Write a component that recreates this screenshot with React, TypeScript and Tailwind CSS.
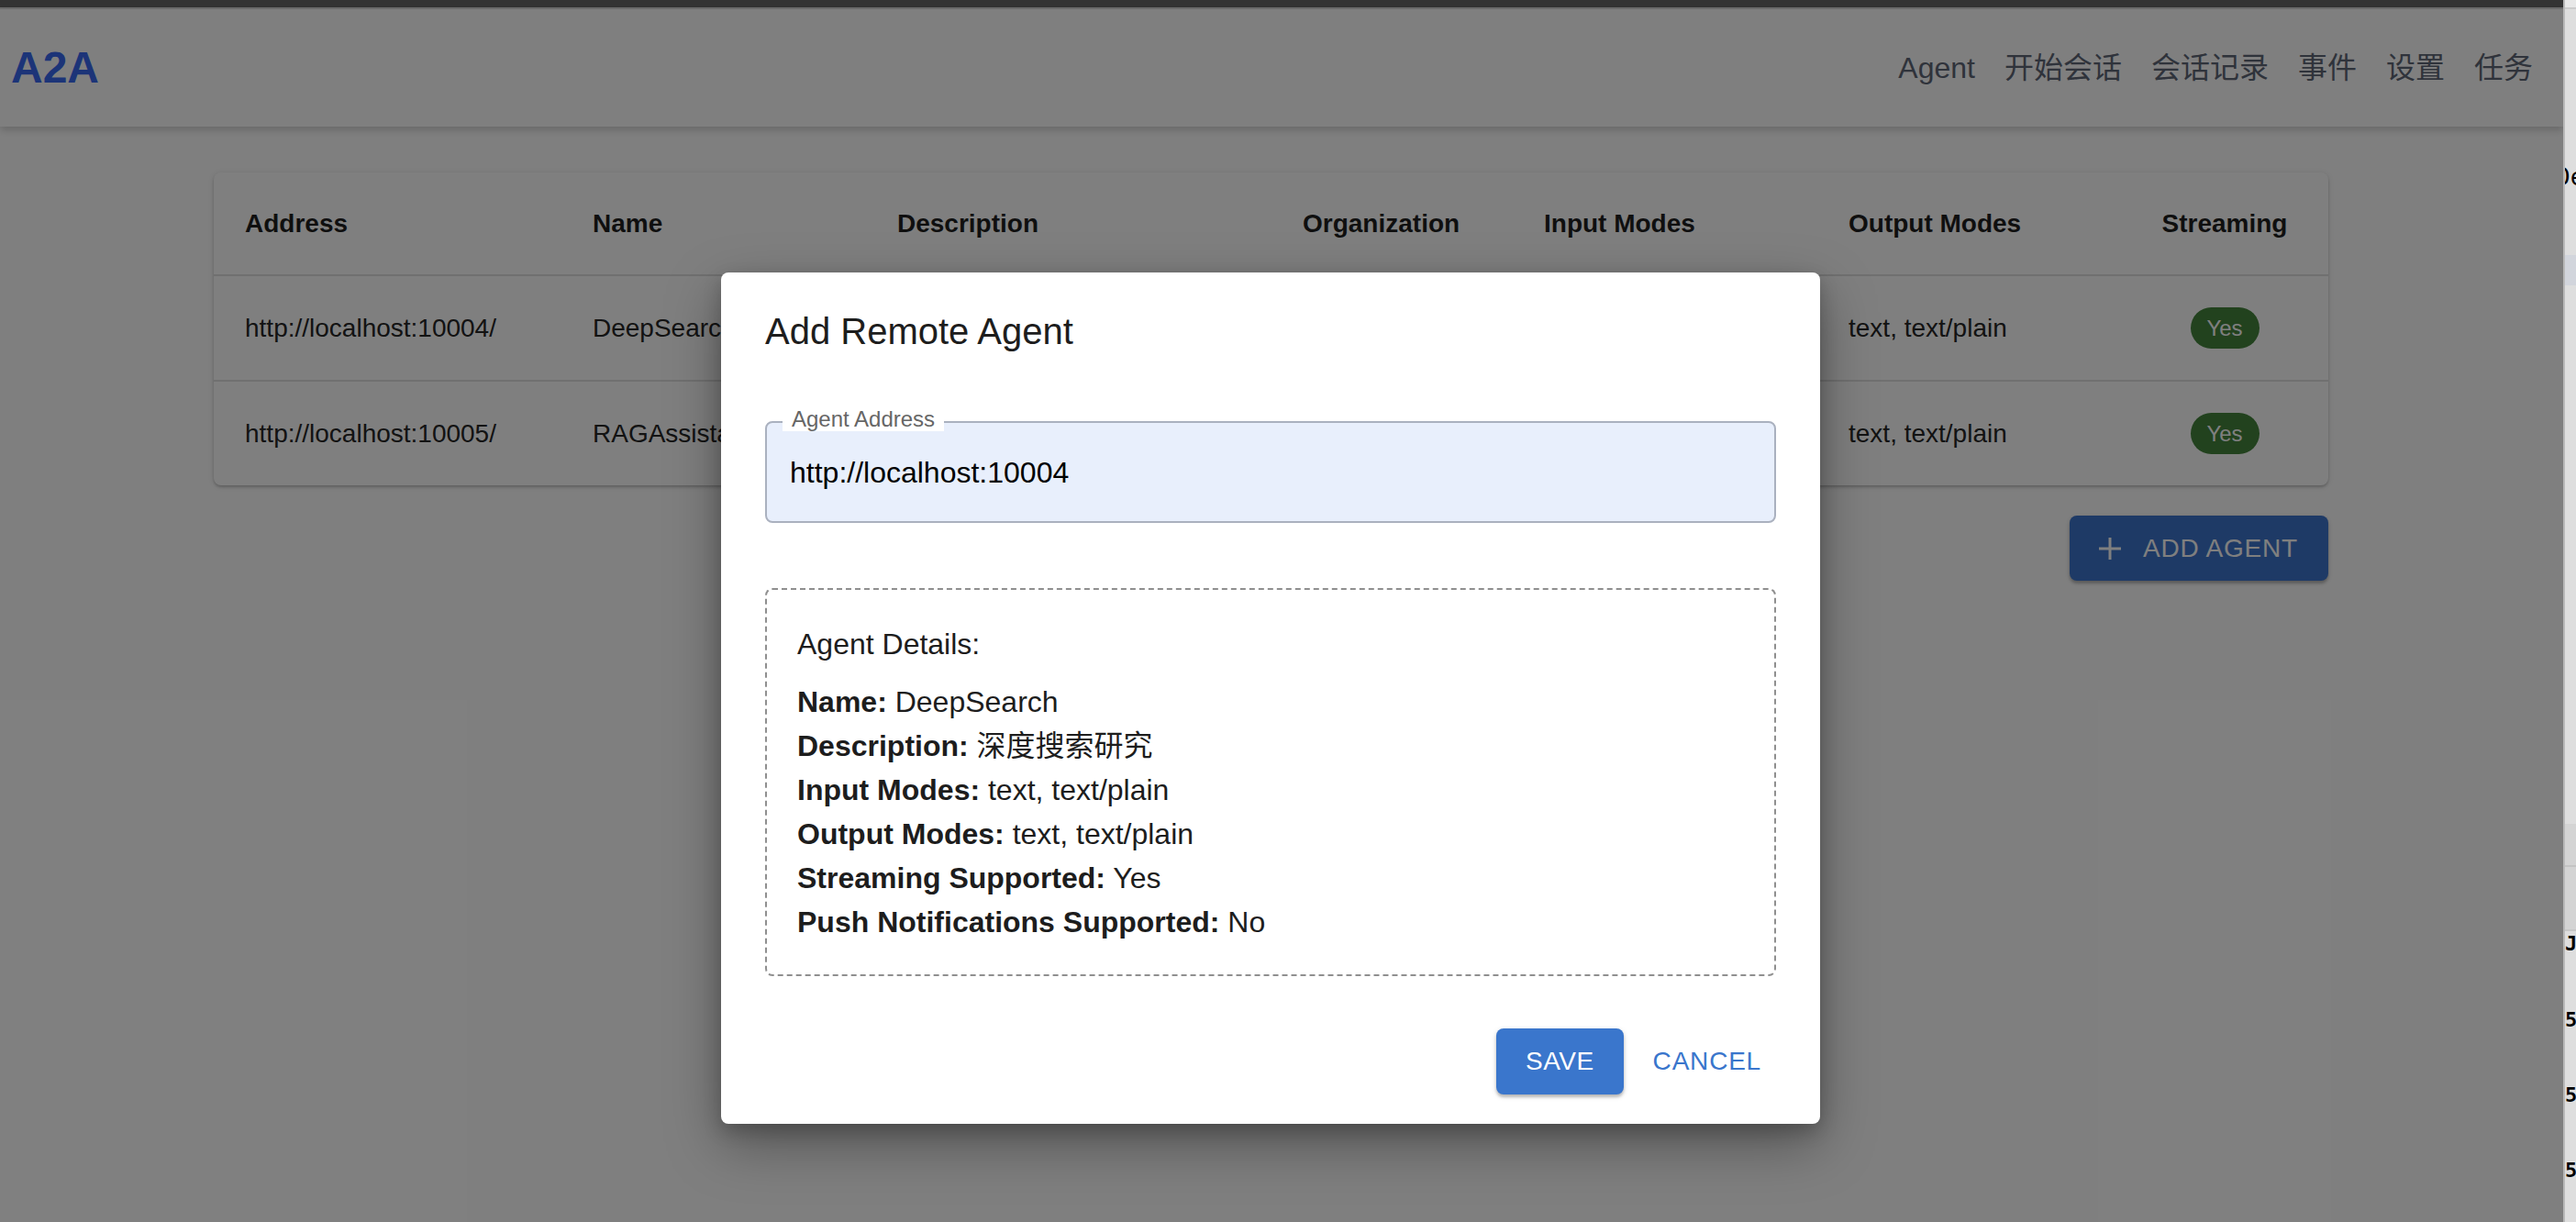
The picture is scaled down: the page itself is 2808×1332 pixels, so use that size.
import React from "react";

const cols = "grid grid-cols-[379px_332px_442px_263px_332px_331px_226px] items-center";

type Row = {
  address: string;
  name: string;
  description: string;
  org: string;
  input: string;
  output: string;
};

const rows: Row[] = [
  {
    address: "http://localhost:10004/",
    name: "DeepSearch",
    description: "深度搜索研究",
    org: "",
    input: "text, text/plain",
    output: "text, text/plain",
  },
  {
    address: "http://localhost:10005/",
    name: "RAGAssistant",
    description: "知识库问答",
    org: "",
    input: "text, text/plain",
    output: "text, text/plain",
  },
];

function PlusIcon() {
  return (
    <svg width="26" height="26" viewBox="0 0 26 26" fill="none">
      <path d="M13 1v24M1 13h24" stroke="white" strokeWidth="3" strokeLinecap="butt" />
    </svg>
  );
}

function DetailLine({ label, value }: { label: string; value: string }) {
  return (
    <div className="leading-[48px] whitespace-nowrap">
      <span className="font-bold">{label}</span> {value}
    </div>
  );
}

export default function App() {
  return (
    <div className="flex w-[2808px] h-[1332px] overflow-hidden font-['Liberation_Sans','Noto_Sans_CJK_SC',sans-serif]">
      {/* Page viewport */}
      <div className="relative w-[2794px] h-full bg-white overflow-hidden">
        <div className="h-[8px] bg-[#666666]" />
        <div className="h-[2px] bg-[#dcdcdc]" />
        <header className="relative z-10 h-[128px] bg-white shadow-[0_4px_8px_rgba(0,0,0,0.18)] flex items-center justify-between pl-[12px] pr-[33px]">
          <div className="text-[48px] font-bold text-[#3869f0] leading-none">A2A</div>
          <nav className="flex gap-[32px] text-[32px] text-[#5e6676] leading-none">
            <span>Agent</span>
            <span>开始会话</span>
            <span>会话记录</span>
            <span>事件</span>
            <span>设置</span>
            <span>任务</span>
          </nav>
        </header>

        <main className="pt-[50px] pl-[233px]">
          <div className="w-[2305px] rounded-[8px] bg-white shadow-[0_2px_3px_rgba(0,0,0,0.2),0_1px_8px_rgba(0,0,0,0.1)] overflow-hidden">
            <div className={`${cols} h-[111px] text-[28px] font-bold text-[#1f1f1f]`}>
              <div className="pl-[34px]">Address</div>
              <div className="pl-[34px]">Name</div>
              <div className="pl-[34px]">Description</div>
              <div className="pl-[34px]">Organization</div>
              <div className="pl-[34px]">Input Modes</div>
              <div className="pl-[34px]">Output Modes</div>
              <div className="text-center">Streaming</div>
            </div>
            {rows.map((r) => (
              <div
                key={r.address}
                className={`${cols} h-[115px] border-t-2 border-[#e0e0e0] text-[28px] text-[#262626] whitespace-nowrap`}
              >
                <div className="pl-[34px]">{r.address}</div>
                <div className="pl-[34px]">{r.name}</div>
                <div className="pl-[34px]">{r.description}</div>
                <div className="pl-[34px]">{r.org}</div>
                <div className="pl-[34px]">{r.input}</div>
                <div className="pl-[34px]">{r.output}</div>
                <div className="flex justify-center">
                  <span className="inline-flex h-[45px] w-[75px] items-center justify-center rounded-full bg-[#44843c] text-[24px] text-white">
                    Yes
                  </span>
                </div>
              </div>
            ))}
          </div>
          <div className="w-[2305px] flex justify-end mt-[33px]">
            <button className="flex items-center h-[71px] w-[282px] rounded-[8px] bg-[#3c74cc] pl-[31px] gap-[23px] text-[28px] tracking-[0.8px] text-white shadow-[0_3px_3px_rgba(0,0,0,0.2),0_2px_6px_rgba(0,0,0,0.14)]">
              <PlusIcon />
              <span>ADD AGENT</span>
            </button>
          </div>
        </main>

        {/* Modal backdrop */}
        <div className="absolute inset-0 z-20 bg-black/50" />

        {/* Dialog */}
        <div className="absolute z-30 left-[786px] top-[297px] w-[1198px] h-[928px] rounded-[8px] bg-white shadow-[0_22px_60px_rgba(0,0,0,0.35),0_8px_20px_rgba(0,0,0,0.2)] px-[48px] pt-[40px] flex flex-col">
          <h2 className="text-[40px] leading-[48px] text-[#1d1d1d]">Add Remote Agent</h2>

          <div className="relative mt-[74px] h-[111px] rounded-[8px] border-2 border-[#aab1bf] bg-[#e8effc] flex items-center pl-[25px]">
            <span className="absolute left-[17px] top-[-17px] bg-white px-[10px] text-[24px] leading-[26px] text-[#666666]">
              Agent Address
            </span>
            <span className="text-[32px] text-black">http://localhost:10004</span>
          </div>

          <div className="mt-[71px] rounded-[8px] border-2 border-dashed border-[#8f8f8f] pl-[33px] pt-[35px] pb-[33px] text-[32px] text-[#1d1d1d]">
            <p className="leading-[48px] mb-[15px]">Agent Details:</p>
            <DetailLine label="Name:" value="DeepSearch" />
            <DetailLine label="Description:" value="深度搜索研究" />
            <DetailLine label="Input Modes:" value="text, text/plain" />
            <DetailLine label="Output Modes:" value="text, text/plain" />
            <DetailLine label="Streaming Supported:" value="Yes" />
            <DetailLine label="Push Notifications Supported:" value="No" />
          </div>

          <div className="mt-[57px] flex justify-end gap-[16px]">
            <button className="h-[72px] px-[32px] rounded-[8px] bg-[#3a76cc] text-[28px] tracking-[0.5px] text-white shadow-[0_3px_3px_rgba(0,0,0,0.2),0_2px_6px_rgba(0,0,0,0.14)]">
              SAVE
            </button>
            <button className="h-[72px] px-[16px] text-[28px] tracking-[0.8px] text-[#3a76cc]">CANCEL</button>
          </div>
        </div>
      </div>

      {/* Side panel strip */}
      <div className="w-[14px] h-full bg-[#dedede] border-l-2 border-[#b8b8b8] overflow-hidden">
        <div className="h-[10px] bg-[#e8e8e8] border-b-2 border-[#cccccc]" />
        <div className="mt-[168px] -ml-[10px] whitespace-nowrap font-['DejaVu_Sans_Mono',monospace] text-[26px] leading-[30px] text-black">
          De
        </div>
        <div className="mt-[70px] h-[33px] bg-[#d2d5dc]" />
        <div className="mt-[587px] h-[117px] bg-[#d4d4d4] border-b-2 border-[#c8c8c8]">
          <div className="h-[47px] border-b-2 border-[#c4c4c4]" />
        </div>
        <div className="mt-[4px] whitespace-nowrap font-['DejaVu_Sans_Mono',monospace] font-bold text-[22px] leading-[20px] text-black">
          J
        </div>
        <div className="mt-[62px] whitespace-nowrap font-['DejaVu_Sans_Mono',monospace] font-bold text-[22px] leading-[22px] text-black">
          5
        </div>
        <div className="mt-[60px] whitespace-nowrap font-['DejaVu_Sans_Mono',monospace] font-bold text-[22px] leading-[22px] text-black">
          5
        </div>
        <div className="mt-[60px] whitespace-nowrap font-['DejaVu_Sans_Mono',monospace] font-bold text-[22px] leading-[22px] text-black">
          5
        </div>
      </div>
    </div>
  );
}
